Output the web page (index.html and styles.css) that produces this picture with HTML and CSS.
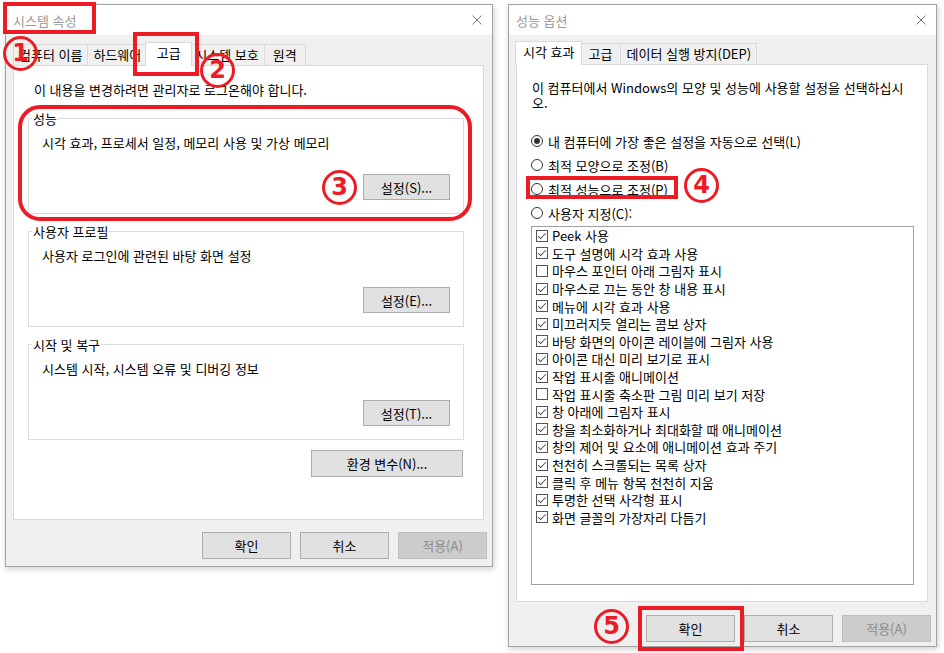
FILE: index.html
```html
<!DOCTYPE html>
<html lang="ko">
<head>
    <meta charset="UTF-8">
    <title>시스템 속성 - 성능 옵션</title>
    <link rel="stylesheet" href="styles.css">
</head>
<body>
<div class="desktop">

    <!-- 시스템 속성 -->
    <div class="dialog dialog-sys">
        <div class="titlebar">
            <span class="title">시스템 속성</span>
            <svg class="close" width="10" height="10" viewBox="0 0 10 10"><path d="M0.5 0.5L9.5 9.5M9.5 0.5L0.5 9.5"/></svg>
        </div>
        <div class="dialog-body">
            <div class="tabs">
                <span class="tab">컴퓨터 이름</span>
                <span class="tab">하드웨어</span>
                <span class="tab active">고급</span>
                <span class="tab">시스템 보호</span>
                <span class="tab">원격</span>
            </div>
            <div class="tab-panel sys-panel">
                <p class="note">이 내용을 변경하려면 관리자로 로그온해야 합니다.</p>

                <fieldset class="group">
                    <legend>성능</legend>
                    <p>시각 효과, 프로세서 일정, 메모리 사용 및 가상 메모리</p>
                    <div class="group-actions"><button class="btn">설정(S)...</button></div>
                </fieldset>

                <fieldset class="group">
                    <legend>사용자 프로필</legend>
                    <p>사용자 로그인에 관련된 바탕 화면 설정</p>
                    <div class="group-actions"><button class="btn">설정(E)...</button></div>
                </fieldset>

                <fieldset class="group">
                    <legend>시작 및 복구</legend>
                    <p>시스템 시작, 시스템 오류 및 디버깅 정보</p>
                    <div class="group-actions"><button class="btn">설정(T)...</button></div>
                </fieldset>

                <div class="env-row"><button class="btn btn-env">환경 변수(N)...</button></div>
            </div>
            <div class="dialog-buttons">
                <button class="btn btn-lg">확인</button>
                <button class="btn btn-lg">취소</button>
                <button class="btn btn-lg" disabled>적용(A)</button>
            </div>
        </div>
    </div>

    <!-- 성능 옵션 -->
    <div class="dialog dialog-perf">
        <div class="titlebar">
            <span class="title">성능 옵션</span>
            <svg class="close" width="10" height="10" viewBox="0 0 10 10"><path d="M0.5 0.5L9.5 9.5M9.5 0.5L0.5 9.5"/></svg>
        </div>
        <div class="dialog-body perf-body">
            <div class="tabs">
                <span class="tab active">시각 효과</span>
                <span class="tab">고급</span>
                <span class="tab">데이터 실행 방지(DEP)</span>
            </div>
            <div class="tab-panel perf-panel">
                <p class="intro">이 컴퓨터에서 Windows의 모양 및 성능에 사용할 설정을 선택하십시<br>오.</p>

                <div class="radio-list">
                    <label class="radio-row"><span class="radio on"></span>내 컴퓨터에 가장 좋은 설정을 자동으로 선택(L)</label>
                    <label class="radio-row"><span class="radio"></span>최적 모양으로 조정(B)</label>
                    <label class="radio-row"><span class="radio"></span>최적 성능으로 조정(P)</label>
                    <label class="radio-row"><span class="radio"></span>사용자 지정(C):</label>
                </div>

                <div class="listbox">
                    <div class="list-row"><span class="check on"></span>Peek 사용</div>
                    <div class="list-row"><span class="check on"></span>도구 설명에 시각 효과 사용</div>
                    <div class="list-row"><span class="check"></span>마우스 포인터 아래 그림자 표시</div>
                    <div class="list-row"><span class="check on"></span>마우스로 끄는 동안 창 내용 표시</div>
                    <div class="list-row"><span class="check on"></span>메뉴에 시각 효과 사용</div>
                    <div class="list-row"><span class="check on"></span>미끄러지듯 열리는 콤보 상자</div>
                    <div class="list-row"><span class="check on"></span>바탕 화면의 아이콘 레이블에 그림자 사용</div>
                    <div class="list-row"><span class="check on"></span>아이콘 대신 미리 보기로 표시</div>
                    <div class="list-row"><span class="check on"></span>작업 표시줄 애니메이션</div>
                    <div class="list-row"><span class="check"></span>작업 표시줄 축소판 그림 미리 보기 저장</div>
                    <div class="list-row"><span class="check on"></span>창 아래에 그림자 표시</div>
                    <div class="list-row"><span class="check on"></span>창을 최소화하거나 최대화할 때 애니메이션</div>
                    <div class="list-row"><span class="check on"></span>창의 제어 및 요소에 애니메이션 효과 주기</div>
                    <div class="list-row"><span class="check on"></span>천천히 스크롤되는 목록 상자</div>
                    <div class="list-row"><span class="check on"></span>클릭 후 메뉴 항목 천천히 지움</div>
                    <div class="list-row"><span class="check on"></span>투명한 선택 사각형 표시</div>
                    <div class="list-row"><span class="check on"></span>화면 글꼴의 가장자리 다듬기</div>
                </div>
            </div>
            <div class="dialog-buttons perf-buttons">
                <button class="btn btn-lg">확인</button>
                <button class="btn btn-lg">취소</button>
                <button class="btn btn-lg" disabled>적용(A)</button>
            </div>
        </div>
    </div>

    <!-- red annotations drawn over the screenshot -->
    <div class="mark-box mark-title"></div>
    <div class="mark-num num-1">1</div>
    <div class="mark-box mark-tab"></div>
    <div class="mark-num num-2">2</div>
    <div class="mark-box mark-group"></div>
    <div class="mark-num num-3">3</div>
    <div class="mark-box mark-radio"></div>
    <div class="mark-num num-4">4</div>
    <div class="mark-box mark-ok"></div>
    <div class="mark-num num-5">5</div>
</div>
</body>
</html>
```

FILE: styles.css
```css
* {
    box-sizing: border-box;
}

body {
    margin: 0;
    background: #fff;
    font-family: "Noto Sans CJK KR", "Malgun Gothic", sans-serif;
    font-size: 13px;
    line-height: 15px;
    color: #000;
}

p {
    margin: 0;
}

.desktop {
    position: relative;
    display: flex;
    align-items: flex-start;
    gap: 15px;
    width: 944px;
    height: 653px;
    padding: 4px 0 0 5px;
    overflow: hidden;
}

/* window frame */
.dialog {
    display: flex;
    flex-direction: column;
    background: #f0f0f0;
    border: 1px solid #a3a3a3;
    box-shadow: 1px 2px 6px rgba(0, 0, 0, 0.2);
}

.dialog-sys {
    width: 488px;
    height: 563px;
}

.dialog-perf {
    width: 429px;
    height: 643px;
}

.titlebar {
    flex-shrink: 0;
    height: 30px;
    background: #fff;
    display: flex;
    align-items: center;
    justify-content: space-between;
    padding: 0 10px 0 7px;
}

.title {
    color: #9a9a9a;
}

.close path {
    stroke: #777;
    stroke-width: 1;
    fill: none;
}

.dialog-body {
    flex: 1;
    display: flex;
    flex-direction: column;
    padding: 9px 8px 7px 7px;
}

.perf-body {
    padding: 8px 8px 4px 7px;
}

/* tabs */
.tabs {
    display: flex;
    align-items: flex-end;
    height: 21px;
    flex-shrink: 0;
}

.tab {
    min-width: 42px;
    height: 21px;
    line-height: 19px;
    padding: 0 5px;
    border: 1px solid #d9d9d9;
    border-bottom: none;
    margin-left: -1px;
    background: #f0f0f0;
    text-align: center;
    white-space: nowrap;
}

.tab:first-child {
    margin-left: 0;
}

.tab.active {
    position: relative;
    z-index: 1;
    min-width: 47px;
    height: 24px;
    line-height: 20px;
    margin: 0 -2px -1px -2px;
    padding: 0 7px;
    background: #fff;
}

.tab.active:first-child {
    margin-left: -1px;
}

.tab-panel {
    flex: 1;
    background: #fff;
    border: 1px solid #d9d9d9;
}

/* 시스템 속성 panel */
.sys-panel {
    padding: 16px 19px 0 14px;
}

.note {
    margin-left: 6px;
    margin-bottom: 14px;
}

.group {
    margin: 0 0 10px 0;
    padding: 0 13px 13px 13px;
    border: 1px solid #dcdcdc;
    min-width: 0;
}

.group legend {
    margin-left: -10px;
    padding: 0 1px;
    line-height: 15px;
}

.group p {
    margin-top: 9px;
}

.group-actions {
    display: flex;
    justify-content: flex-end;
    margin-top: 24px;
}

.env-row {
    display: flex;
    justify-content: flex-end;
    margin-top: 6px;
    padding-right: 1px;
}

/* buttons */
.btn {
    width: 87px;
    height: 26px;
    padding: 0;
    background: #e1e1e1;
    border: 1px solid #adadad;
    font-family: inherit;
    font-size: 13px;
    color: #000;
}

.btn-lg {
    width: 89px;
    height: 27px;
}

.btn-env {
    width: 152px;
    height: 27px;
}

.btn:disabled {
    background: #cccccc;
    border-color: #bfbfbf;
    color: #8b8b8b;
}

.dialog-buttons {
    display: flex;
    justify-content: flex-end;
    gap: 9px;
    margin-top: 12px;
    margin-right: -3px;
    flex-shrink: 0;
}

.perf-buttons {
    margin-top: 13px;
}

/* 성능 옵션 panel */
.perf-panel {
    padding: 15px 13px 0 14px;
}

.intro {
    margin-left: 1px;
}

.radio-list {
    margin-top: 19px;
}

.radio-row {
    display: flex;
    align-items: center;
    gap: 5px;
    height: 24px;
}

.radio {
    width: 12px;
    height: 12px;
    border: 1px solid #333;
    border-radius: 50%;
    display: flex;
    align-items: center;
    justify-content: center;
}

.radio.on::after {
    content: "";
    width: 6px;
    height: 6px;
    border-radius: 50%;
    background: #333;
}

.listbox {
    margin-top: 1px;
    height: 359px;
    border: 1px solid #a0a0a0;
    background: #fff;
}

.list-row {
    display: flex;
    align-items: center;
    gap: 4px;
    height: 17.6px;
    padding-left: 4px;
    white-space: nowrap;
}

.check {
    position: relative;
    width: 12px;
    height: 12px;
    border: 1px solid #555;
    background: #fff;
    flex-shrink: 0;
}

.check.on::after {
    content: "";
    position: absolute;
    left: 3px;
    top: 0px;
    width: 3px;
    height: 7px;
    border: solid #555;
    border-width: 0 1px 1px 0;
    transform: rotate(45deg);
}

/* red annotations */
.mark-box {
    position: absolute;
    border: 4px solid #ed1c24;
}

.mark-title {
    left: 3px;
    top: 2px;
    width: 93px;
    height: 32px;
}

.mark-tab {
    left: 133px;
    top: 32px;
    width: 66px;
    height: 44px;
}

.mark-group {
    left: 18px;
    top: 105px;
    width: 454px;
    height: 116px;
    border-radius: 22px;
}

.mark-radio {
    left: 526px;
    top: 176px;
    width: 152px;
    height: 23px;
}

.mark-ok {
    left: 638px;
    top: 606px;
    width: 106px;
    height: 45px;
}

.mark-num {
    position: absolute;
    width: 35px;
    height: 35px;
    border: 3px solid #ed1c24;
    border-radius: 50%;
    display: flex;
    align-items: center;
    justify-content: center;
    font-family: "DejaVu Sans", sans-serif;
    font-weight: bold;
    font-size: 24px;
    color: #ed1c24;
}

.num-1 {
    left: 3px;
    top: 36px;
}

.num-2 {
    left: 200px;
    top: 53px;
}

.num-3 {
    left: 322px;
    top: 170px;
}

.num-4 {
    left: 684px;
    top: 168px;
}

.num-5 {
    left: 594px;
    top: 609px;
}
```
